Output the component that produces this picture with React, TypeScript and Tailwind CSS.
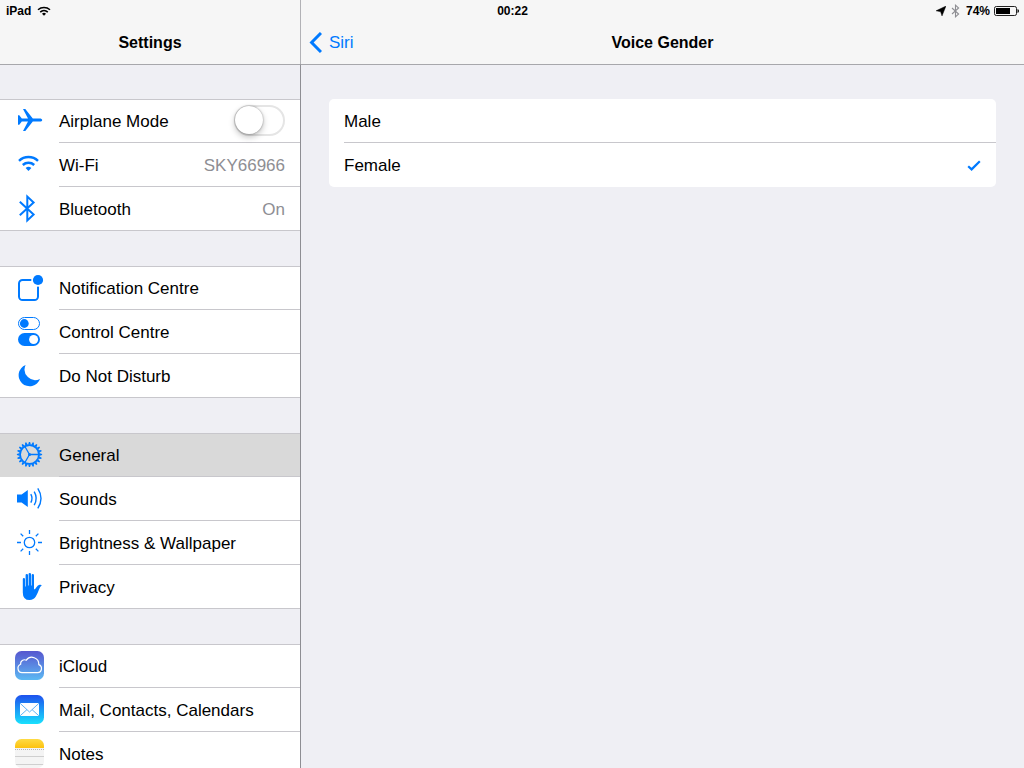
import React, { useState } from 'react';

const BLUE = '#007aff';

function Glyph({ children }: { children: React.ReactNode }) {
  return (
    <svg viewBox="0 0 29 29" className="size-[29px]" fill="none" aria-hidden="true">
      {children}
    </svg>
  );
}

const AirplaneIcon = () => (
  <Glyph>
    <path
      fill={BLUE}
      d="M3 9.2H4.3L6.8 12.4H13L8 2.9H10.3L17.8 12.4H24.6C26.2 12.4 27.2 13.1 27.2 14S26.2 15.6 24.6 15.6H17.8L10.3 25.1H8L13 15.6H6.8L4.3 18.8H3Z"
    />
  </Glyph>
);

const WifiIcon = () => (
  <Glyph>
    <g stroke={BLUE} strokeWidth="2.5">
      <path d="M4 10.8A14 14 0 0 1 23 10.8" />
      <path d="M7.8 15A8.6 8.6 0 0 1 19.2 15" />
    </g>
    <path fill={BLUE} d="M10.6 18.1A4.2 4.2 0 0 1 16.4 18.1L13.5 21.1Z" />
  </Glyph>
);

const BluetoothIcon = () => (
  <Glyph>
    <path d="M4.8 7.8L18.6 20.6L12.3 26.4V2.6L18.6 8.4L4.8 21.2" stroke={BLUE} strokeWidth="2" />
  </Glyph>
);

const NotificationIcon = () => (
  <Glyph>
    <rect x="4" y="7" width="19" height="20" rx="3.6" stroke={BLUE} strokeWidth="2" />
    <circle cx="23" cy="7" r="6.8" fill="#fff" />
    <circle cx="23" cy="7" r="5.1" fill={BLUE} />
  </Glyph>
);

const ControlIcon = () => (
  <Glyph>
    <rect x="3.5" y="0.5" width="21" height="12" rx="6" stroke={BLUE} />
    <circle cx="9.3" cy="6.5" r="4.4" fill={BLUE} />
    <rect x="3" y="16" width="22" height="13" rx="6.5" fill={BLUE} />
    <circle cx="18.6" cy="22.5" r="4.5" fill="#fff" />
  </Glyph>
);

const MoonIcon = () => (
  <Glyph>
    <path fill={BLUE} d="M10.6 4A11 11 0 1 0 25 17.9A10.6 10.6 0 0 1 10.6 4Z" />
  </Glyph>
);

const GEAR_TEETH = Array.from({ length: 20 }, (_, i) => i * 18);

const GearIcon = () => (
  <Glyph>
    <circle cx="14.5" cy="14.5" r="9.4" stroke={BLUE} strokeWidth="1.7" />
    {GEAR_TEETH.map((angle) => (
      <path
        key={angle}
        d="M13.1 4.8L13.9 1.9H15.1L15.9 4.8Z"
        fill={BLUE}
        transform={`rotate(${angle} 14.5 14.5)`}
      />
    ))}
    <path d="M14.5 14.5H24.4M14.5 14.5L9.6 6M14.5 14.5L9.6 23" stroke={BLUE} strokeWidth="1.3" />
    <circle cx="14.5" cy="14.5" r="1.5" fill={BLUE} />
  </Glyph>
);

const SoundIcon = () => (
  <Glyph>
    <path fill={BLUE} d="M2 10.6H6.6L12.8 6V23L6.6 18.4H2Z" />
    <g stroke={BLUE} strokeWidth="1.4">
      <path d="M15.8 10.2Q18.2 14.4 15.8 18.6" />
      <path d="M19.2 7.6Q23.2 14.4 19.2 21.2" />
      <path d="M22.8 4.4Q29.2 14.4 22.8 24.4" />
    </g>
  </Glyph>
);

const SunIcon = () => (
  <Glyph>
    <g stroke={BLUE} strokeWidth="1.3">
      <circle cx="14.5" cy="14.5" r="5.2" />
      <path d="M14.5 2V6M14.5 23V27M2 14.5H6M23 14.5H27M5.6 5.6L8.2 8.2M20.8 20.8L23.4 23.4M5.6 23.4L8.2 20.8M20.8 8.2L23.4 5.6" />
    </g>
  </Glyph>
);

const HandIcon = () => (
  <Glyph>
    <path
      fill={BLUE}
      d="M7.8 7Q7.8 5.9 8.9 5.9T10 7V14.4H10.6V3.1Q10.6 2 11.8 2T13 3.1V13.6H13.6V2.1Q13.6 1 14.8 1T16 2.1V13.6H16.6V3.2Q16.6 2.1 17.8 2.1T19 3.2V17.4Q20.4 17 21.6 14.9Q22.8 13 24.6 12.8Q26.4 12.6 26.8 13.2Q25 14.8 24 17.4Q22.6 21.4 20.8 24.6Q18.8 28 14.6 28Q7.8 28 7.8 20.4Z"
    />
  </Glyph>
);

const CloudIcon = () => (
  <Glyph>
    <defs>
      <linearGradient id="cloud-fill" x1="0" y1="0" x2="0" y2="1">
        <stop offset="0" stopColor="#5756cf" />
        <stop offset="1" stopColor="#5cb9f3" />
      </linearGradient>
    </defs>
    <rect width="29" height="29" rx="6.5" fill="url(#cloud-fill)" />
    <path
      stroke="#fff"
      strokeWidth="1.2"
      d="M7 21.7H22.6A4.2 4.2 0 0 0 23.8 13.6A6.9 6.9 0 0 0 11.3 9.2A4 4 0 0 0 5.6 13.3A4.4 4.4 0 0 0 7 21.7Z"
    />
  </Glyph>
);

const MailIcon = () => (
  <Glyph>
    <defs>
      <linearGradient id="mail-fill" x1="0" y1="0" x2="0" y2="1">
        <stop offset="0" stopColor="#1e51ee" />
        <stop offset="1" stopColor="#19e1fd" />
      </linearGradient>
    </defs>
    <rect width="29" height="29" rx="6.5" fill="url(#mail-fill)" />
    <rect x="5" y="8" width="19" height="13" rx="0.8" fill="#fff" />
    <path d="M5.2 8.4L14.5 17L23.8 8.4M5.2 20.7L11.9 14.7M23.8 20.7L17.1 14.7" stroke="#3aa0f2" strokeWidth="0.8" />
  </Glyph>
);

const NotesIcon = () => (
  <Glyph>
    <defs>
      <linearGradient id="notes-fill" x1="0" y1="0" x2="0" y2="1">
        <stop offset="0" stopColor="#fedb45" />
        <stop offset="1" stopColor="#fdc20f" />
      </linearGradient>
      <clipPath id="notes-clip">
        <rect width="29" height="29" rx="6.5" />
      </clipPath>
    </defs>
    <g clipPath="url(#notes-clip)">
      <rect width="29" height="29" fill="#f4f4f4" />
      <rect width="29" height="9" fill="url(#notes-fill)" />
      <path d="M0 10.5H29" stroke="#b4b4b4" strokeDasharray="1 1" />
      <path d="M0 17.5H29M0 25.5H29" stroke="#cfcfcf" />
    </g>
  </Glyph>
);

type Item = { label: string; icon: () => React.ReactElement; value?: string; toggle?: boolean };

const groups: Item[][] = [
  [
    { label: 'Airplane Mode', icon: AirplaneIcon, toggle: true },
    { label: 'Wi-Fi', icon: WifiIcon, value: 'SKY66966' },
    { label: 'Bluetooth', icon: BluetoothIcon, value: 'On' },
  ],
  [
    { label: 'Notification Centre', icon: NotificationIcon },
    { label: 'Control Centre', icon: ControlIcon },
    { label: 'Do Not Disturb', icon: MoonIcon },
  ],
  [
    { label: 'General', icon: GearIcon },
    { label: 'Sounds', icon: SoundIcon },
    { label: 'Brightness & Wallpaper', icon: SunIcon },
    { label: 'Privacy', icon: HandIcon },
  ],
  [
    { label: 'iCloud', icon: CloudIcon },
    { label: 'Mail, Contacts, Calendars', icon: MailIcon },
    { label: 'Notes', icon: NotesIcon },
  ],
];

function Row({ item, selected }: { item: Item; selected: boolean }) {
  const Icon = item.icon;
  const inner = (
    <>
      <span className="flex items-center px-[15px] pb-px group-last:pb-0">
        <Icon />
      </span>
      <span className="flex flex-1 items-center justify-between border-b border-[#c8c7cc] pr-[15px] group-last:border-b-0">
        <span className="pt-0.5">{item.label}</span>
        {item.value && <span className="pt-0.5 text-[#8e8e93]">{item.value}</span>}
        {item.toggle && (
          <input
            type="checkbox"
            role="switch"
            className="h-[31px] w-[51px] appearance-none rounded-full border-2 border-[#e5e5e5] bg-white before:block before:size-7 before:-translate-x-px before:-translate-y-px before:rounded-full before:bg-white before:shadow-[0_3px_6px_rgba(0,0,0,0.25),0_0_2px_rgba(0,0,0,0.4)] checked:border-[#4cd964] checked:bg-[#4cd964] checked:before:translate-x-5"
          />
        )}
      </span>
    </>
  );
  return (
    <li
      className={
        selected
          ? 'group flex h-11 bg-[#d9d9d9] shadow-[inset_0_1px_0_#c8c7cc] last:border-b last:border-[#c8c7cc]'
          : 'group flex h-11 last:border-b last:border-[#c8c7cc]'
      }
    >
      {item.toggle ? (
        <label className="flex flex-1">{inner}</label>
      ) : (
        <a href="#" aria-current={selected ? 'page' : undefined} className="flex flex-1">
          {inner}
        </a>
      )}
    </li>
  );
}

function StatusBar() {
  return (
    <div className="z-10 col-span-2 col-start-1 row-start-1 grid h-5 grid-cols-3 items-center pt-px pr-[5px] pl-[6px] text-[12px] leading-5 font-bold">
      <div className="flex items-center gap-[6px]">
        <span>iPad</span>
        <svg viewBox="0 0 14 10" className="h-[10px] w-[14px]" fill="none" aria-hidden="true">
          <path d="M1 3.7A9 9 0 0 1 13 3.7M3.2 6.1A5.6 5.6 0 0 1 10.8 6.1" stroke="#000" strokeWidth="1.5" />
          <path d="M5 7.7A3 3 0 0 1 9 7.7L7 9.8Z" fill="#000" />
        </svg>
      </div>
      <time className="text-center">00:22</time>
      <div className="flex items-center justify-end">
        <svg viewBox="0 0 10 10" className="mr-[5px] size-[10px]" aria-hidden="true">
          <path d="M10 0L6 10L4.6 5.8L0 4.8Z" fill="#000" stroke="#000" strokeWidth="0.4" />
        </svg>
        <svg viewBox="0 0 9 14" className="mr-[6px] h-[14px] w-[9px]" fill="none" aria-hidden="true">
          <path d="M1 4L7.6 10L4.5 12.8V1.2L7.6 4L1 10" stroke="#8e8e93" strokeWidth="1.1" />
        </svg>
        <span className="mr-1">74%</span>
        <svg viewBox="0 0 25 10" className="h-[10px] w-[25px]" fill="none" aria-hidden="true">
          <rect x="0.5" y="0.5" width="22" height="9" rx="1.8" stroke="#222" />
          <rect x="2" y="2" width="14" height="6" fill="#000" />
          <path d="M23.5 3Q25 3.3 25 5T23.5 7Z" fill="#000" />
        </svg>
      </div>
    </div>
  );
}

export default function App() {
  const [voice, setVoice] = useState('Female');
  return (
    <div className="grid h-screen grid-cols-[301px_minmax(0,1fr)] grid-rows-[20px_44px_minmax(0,1fr)] overflow-hidden bg-[#efeff4] font-['Liberation_Sans',Arial,sans-serif] text-[17px] leading-6 text-black">
      <StatusBar />
      <header className="col-start-1 row-span-2 row-start-1 flex items-center justify-center border-r border-[#b2b2b6] bg-[#f6f6f6] pt-5">
        <h1 className="pt-0.5 text-[16px] font-bold">Settings</h1>
      </header>
      <header className="col-start-2 row-span-2 row-start-1 grid grid-cols-[1fr_auto_1fr] items-center bg-[#f6f6f6] pt-5">
        <a href="#" className="flex items-center gap-[7px] pl-2 text-[#007aff]">
          <svg viewBox="0 0 13 21" className="h-[21px] w-[13px]" fill="none" aria-hidden="true">
            <path d="M12 1L2.6 10.5L12 20" stroke={BLUE} strokeWidth="3" />
          </svg>
          <span className="pt-0.5">Siri</span>
        </a>
        <h2 className="pt-0.5 text-[16px] font-bold">Voice Gender</h2>
      </header>

      <nav
        aria-label="Settings"
        className="row-start-3 flex flex-col gap-[35px] overflow-y-auto border-t border-r border-t-[#a7a7ab] border-r-[#8e8e93] pt-[34px] [scrollbar-width:none]"
      >
        {groups.map((group) => (
          <ul key={group[0].label} className="shrink-0 bg-white shadow-[inset_0_1px_0_#c8c7cc]">
            {group.map((item) => (
              <Row key={item.label} item={item} selected={item.label === 'General'} />
            ))}
          </ul>
        ))}
      </nav>

      <main className="row-start-3 border-t border-[#a7a7ab] px-7 pt-[34px]">
        <div
          role="radiogroup"
          aria-label="Voice Gender"
          className="overflow-hidden rounded-[5px] bg-white pl-[15px]"
        >
          {['Male', 'Female'].map((option) => (
            <label
              key={option}
              className="flex h-11 items-center justify-between border-b border-[#c8c7cc] pr-[15px] last:border-transparent"
            >
              <input
                type="radio"
                name="voice"
                className="peer sr-only"
                checked={voice === option}
                onChange={() => setVoice(option)}
              />
              <span className="pt-0.5">{option}</span>
              <svg
                viewBox="0 0 14 12"
                className="invisible h-3 w-[14px] peer-checked:visible"
                fill="none"
                aria-hidden="true"
              >
                <path d="M1.2 7.2L4.6 10.4L12.8 2.2" stroke={BLUE} strokeWidth="2.2" />
              </svg>
            </label>
          ))}
        </div>
      </main>
    </div>
  );
}
